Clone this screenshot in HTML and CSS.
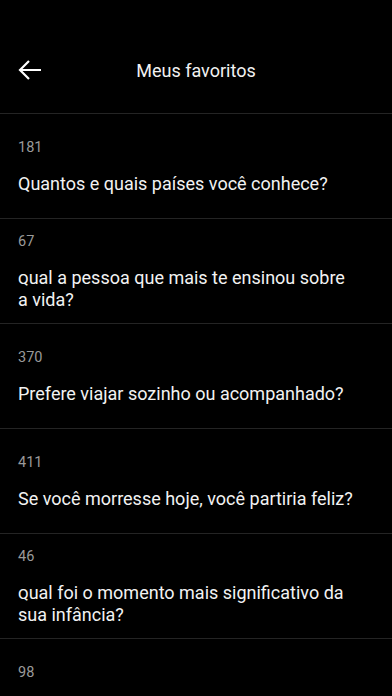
FILE: index.html
```html
<!DOCTYPE html>
<html lang="pt-BR">
<head>
  <meta charset="UTF-8">
  <meta name="viewport" content="width=device-width, initial-scale=1.0">
  <title>Meus favoritos</title>
  <link rel="stylesheet" href="styles.css">
</head>
<body>
  <div class="header">
    <button class="back" aria-label="Voltar">
      <svg width="26" height="26" viewBox="0 0 26 26">
        <path d="M24 13H3M12 4L3 13l9 9" fill="none" stroke="#fff" stroke-width="2.2"/>
      </svg>
    </button>
    <div class="title">Meus favoritos</div>
  </div>

  <div class="list">
    <div class="item">
      <div class="num">181</div>
      <div class="question">Quantos e quais países você conhece?</div>
    </div>
    <div class="item">
      <div class="num">67</div>
      <div class="question"><span class="sq">Q</span>ual a pessoa que mais te ensinou sobre a vida?</div>
    </div>
    <div class="item">
      <div class="num">370</div>
      <div class="question">Prefere viajar sozinho ou acompanhado?</div>
    </div>
    <div class="item">
      <div class="num">411</div>
      <div class="question">Se você morresse hoje, você partiria feliz?</div>
    </div>
    <div class="item">
      <div class="num">46</div>
      <div class="question"><span class="sq">Q</span>ual foi o momento mais significativo da sua infância?</div>
    </div>
    <div class="item">
      <div class="num">98</div>
      <div class="question">Qual é o seu maior sonho?</div>
    </div>
  </div>
</body>
</html>
```

FILE: styles.css
```css
body {
  margin: 0;
  background-color: #000;
  color: #f2f2f2;
  font-family: Roboto, "Noto Sans", sans-serif;
}
.header {
  position: relative;
  height: 114px;
  display: flex;
  align-items: center;
  justify-content: center;
  padding-top: 27px;
  box-sizing: border-box;
  border-bottom: 1px solid #242424;
}
.back {
  position: absolute;
  left: 17px;
  top: 57px;
  background: none;
  border: none;
  padding: 0;
  cursor: pointer;
}
.title {
  font-size: 18px;
  color: #f2f2f2;
}
.item {
  min-height: 104px;
  display: flex;
  flex-direction: column;
  justify-content: center;
  padding: 0 34px 0 18px;
  border-bottom: 1px solid #242424;
}
.num {
  font-size: 14.5px;
  line-height: 20px;
  color: #9a9a9a;
  margin-bottom: 15px;
}
.question {
  font-size: 18px;
  line-height: 22px;
  color: #f2f2f2;
}
.sq {
  font-variant-caps: all-small-caps;
}
```
